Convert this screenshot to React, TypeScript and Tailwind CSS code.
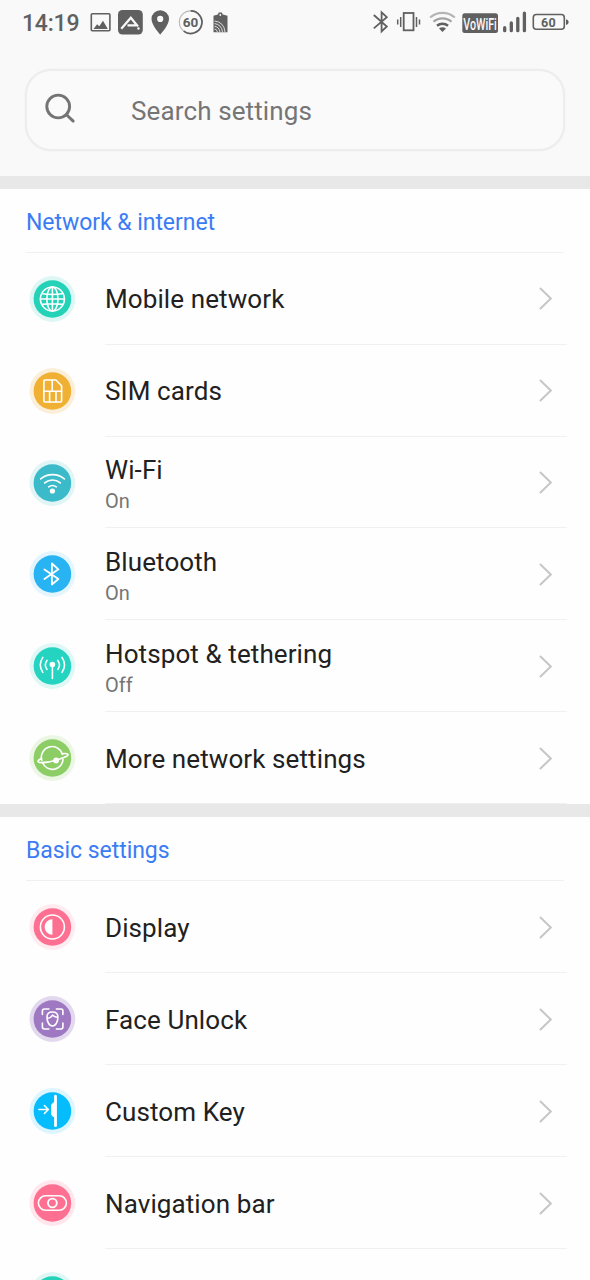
import type { ReactNode } from "react";

type Item = {
  label: string;
  status?: string;
  color: string;
  ring: string;
  icon: ReactNode;
};

const networkItems: Item[] = [
  {
    label: "Mobile network",
    color: "#24d2b8",
    ring: "#dff7f4",
    icon: (
      <>
        <circle cx="23" cy="23" r="12" />
        <ellipse cx="23" cy="23" rx="5.6" ry="12" />
        <path d="M23 11v24M11 23h24M13 17.8q10 1.4 20 0M13 28.4q10-1.4 20 0" />
      </>
    ),
  },
  {
    label: "SIM cards",
    color: "#efb033",
    ring: "#fcefd9",
    icon: (
      <>
        <path d="M15.5 12h11l5.7 5.7V33a1 1 0 0 1-1 1H15.5a1 1 0 0 1-1-1V13a1 1 0 0 1 1-1Z" />
        <path d="M14.5 23.2h17.7M22.8 12v11.2M20.2 23.2V34M26.6 23.2V34" />
      </>
    ),
  },
  {
    label: "Wi-Fi",
    status: "On",
    color: "#3bbac9",
    ring: "#e1f5f7",
    icon: (
      <>
        <path d="M11.3 18.9a18.5 18.5 0 0 1 23.6 0M15.3 22.900a12 12 0 0 1 15.6 0M19.3 26.900a6.500 6.500 0 0 1 7.600 0" />
        <circle cx="23" cy="31" r="2.600" fill="white" stroke="none" />
      </>
    ),
  },
  {
    label: "Bluetooth",
    status: "On",
    color: "#28b3f2",
    ring: "#e4f5fe",
    icon: <path d="M15 18.5 29 28l-6.500 5.500v-21L29 18.300 15 28" strokeWidth="1.800" />,
  },
  {
    label: "Hotspot & tethering",
    status: "Off",
    color: "#24d4c0",
    ring: "#dff8f5",
    icon: (
      <>
        <circle cx="23" cy="21.500" r="2.800" fill="white" stroke="none" />
        <path d="M23 22v13.500M17.600 17.400a7.500 7.500 0 0 0 0 9M28.400 17.400a7.500 7.500 0 0 1 0 9M13.400 14.400a13.500 13.500 0 0 0 0 15M32.600 14.400a13.500 13.500 0 0 1 0 15" />
      </>
    ),
  },
  {
    label: "More network settings",
    color: "#8ccd66",
    ring: "#ebf7e4",
    icon: (
      <>
        <path d="M12.400 25.500A10.600 10.600 0 0 1 33 19.200M13.300 28a10.600 10.600 0 0 0 20.300-3.800" />
        <path d="M12.200 23.500c-2.500 1-4 2.300-3.400 3.200 1.200 1.500 9.300.8 17.700-1.500 7.600-2 12.800-4.400 12-5.900-.500-.9-2.700-1-5.700-.5" />
        <circle cx="26.700" cy="25.500" r="2.900" fill="white" stroke="none" />
      </>
    ),
  },
];

const basicItems: Item[] = [
  {
    label: "Display",
    color: "#fd7091",
    ring: "#ffecf1",
    icon: (
      <>
        <circle cx="23" cy="23" r="12" />
        <path d="M23 15.200v15.600a7.800 7.800 0 0 1 0-15.600Z" fill="white" stroke="none" />
      </>
    ),
  },
  {
    label: "Face Unlock",
    color: "#9f78c2",
    ring: "#e3d9ee",
    icon: (
      <>
        <path d="M13 18.500V15a2 2 0 0 1 2-2h4.500M27 13h4.500a2 2 0 0 1 2 2v3.500M33.500 27v4a2 2 0 0 1-2 2H27M19.500 33H15a2 2 0 0 1-2-2v-4" />
        <path d="M17.600 21c0-3.400 2.200-5 5.400-5s5.500 1.600 5.500 5c0 4.500-2 9-5.500 9s-5.400-4.500-5.400-9ZM17.600 22.500c3-.3 4.700-1.600 5.600-3.500 1.200 1.300 3 2.300 5.200 2.500" />
      </>
    ),
  },
  {
    label: "Custom Key",
    color: "#05bdfc",
    ring: "#dcf5fe",
    icon: (
      <>
        <path d="M9.500 21.500h9M15 17.500l4 4-4 4" />
        <path
          d="M24.700 8.200a1.400 1.400 0 0 1 2.800 0v29.500a1.400 1.400 0 0 1-2.800 0v-8.700h-1l-2-2.500v-9.500l2-2.500h1Z"
          fill="white"
          stroke="none"
        />
      </>
    ),
  },
  {
    label: "Navigation bar",
    color: "#fd7091",
    ring: "#ffe7ed",
    icon: (
      <>
        <rect x="9" y="15.700" width="28" height="14.600" rx="7.300" />
        <circle cx="23" cy="23" r="4.400" strokeWidth="1.900" />
      </>
    ),
  },
  {
    label: "",
    color: "#24d2b8",
    ring: "#dff7f4",
    icon: null,
  },
];

const StatusBar = () => (
  <div className="flex h-[46px] items-center justify-between pl-[22px] pr-[20px] text-[#606060]">
    <div className="flex items-center">
      <span className="w-[68px] pt-0.5 text-[23px] font-medium leading-[46px] tracking-[-0.2px]">
        14:19
      </span>
      {/* left notification icons */}
      <svg width="142" height="46" viewBox="90 0 142 46" fill="currentColor">
        <rect x="91.300" y="13.800" width="18.600" height="17" rx="1" fill="none" stroke="currentColor" strokeWidth="1.600" />
        <path d="m93.500 29 3.600-4.800 2.200 2 3.700-5.400 4.800 8.200Z" />
        <rect x="118" y="10" width="24.800" height="24.500" rx="4.500" />
        <path d="m121.300 28.800 9.500-11 7.200 8.700M127.500 25.300h8.500" fill="none" stroke="#f9f9f9" strokeWidth="2.200" />
        <circle cx="138.500" cy="28.500" r="1.200" fill="#f9f9f9" />
        <path
          fillRule="evenodd"
          d="M160.200 10.200a8.700 8.700 0 0 0-8.700 8.700c0 6.200 8.700 15.600 8.700 15.600s8.800-9.400 8.800-15.600a8.700 8.700 0 0 0-8.800-8.700Zm0 5.600a3.100 3.100 0 1 1 0 6.200 3.100 3.100 0 0 1 0-6.200Z"
        />
        <circle cx="190.700" cy="22.200" r="11.300" fill="none" stroke="#b8b8b8" strokeWidth="1.100" />
        <path d="M190.700 10.900a11.300 11.300 0 1 1-7 20.200" fill="none" stroke="currentColor" strokeWidth="1.700" />
        <text x="190.500" y="27" textAnchor="middle" fontSize="13.500" fontWeight="700">
          60
        </text>
        <path d="M213.500 15.700l4.300-1.200 1-2h3l1 2 4.700 1.200v16.500h-14Z" />
        <circle cx="220.300" cy="15" r="0.900" fill="#f9f9f9" />
        <path
          d="M214.500 29q2.200 0 3 3M214.500 26.300q4.500.5 5.500 5.700M214.500 23.600q7 .8 8 8.400M214.500 21q9.500 1 10.500 11"
          fill="none"
          stroke="#f9f9f9"
          strokeWidth="0.800"
        />
      </svg>
    </div>
    <svg width="200" height="46" viewBox="370 0 200 46" fill="none" stroke="currentColor">
      <path d="m373.800 15 13 11.500-5.200 4.900V12.400l5.200 4.800-13 11.200" strokeWidth="1.800" />
      <rect x="403.700" y="13" width="9.800" height="17.300" strokeWidth="1.800" />
      <path d="M400.700 17v10M416.500 17v10M397.700 19.500v5M419.500 19.500v5" strokeWidth="1.500" />
      {/* wifi, outer arcs are dimmed */}
      <path d="M430.200 17.500a18.500 18.500 0 0 1 24.600 0" stroke="#b5b5b5" strokeWidth="2.200" />
      <path d="M433.500 21.800a13.500 13.500 0 0 1 18 0" stroke="#a2a2a2" strokeWidth="2.200" />
      <path d="M437 25.800a8.500 8.500 0 0 1 11 0" strokeWidth="2.500" />
      <path d="M439 28.500q3.500-2.500 7 0l-3.500 3.500Z" fill="currentColor" stroke="none" />
      <rect x="462.300" y="13.300" width="35.700" height="19.700" rx="2.500" fill="currentColor" stroke="none" />
      <text x="463.300" y="29.700" textLength="33.500" lengthAdjust="spacingAndGlyphs" fontSize="16.500" fontWeight="500" fill="#f9f9f9" stroke="none">
        VoWiFi
      </text>
      <path d="M504.700 27.700v3M511.300 23v7.700M517.800 18.300v12.400M524.400 13.200v17.500" strokeWidth="3.300" strokeLinecap="round" />
      <rect x="533.300" y="14.500" width="31" height="14.700" rx="3" strokeWidth="1.600" />
      <path d="M566 19.200q2.700.5 2.700 2.900t-2.700 2.900Z" fill="currentColor" stroke="none" />
      <text x="548.600" y="26.500" textAnchor="middle" fontSize="12.500" fontWeight="700" letterSpacing="0.500" fill="currentColor" stroke="none">
        60
      </text>
    </svg>
  </div>
);

const SearchBar = () => (
  <div className="mx-[25px] mt-[23px] flex h-[82px] items-center rounded-[26px] border-2 border-[#ededed] bg-[#fafafa] pl-[18px] shadow-[0_0_2px_rgba(0,0,0,0.05)]">
    <svg width="32" height="32" viewBox="0 0 32 32" className="-mt-0.5 shrink-0" fill="none" stroke="#747474" strokeWidth="2.900">
      <circle cx="13.200" cy="13.500" r="11.400" />
      <path d="m21.500 21.800 6.700 6.300" strokeLinecap="round" />
    </svg>
    <span className="ml-[54px] pt-0.5 text-[26px] leading-[30px] tracking-[0.12px] text-[#757575]">
      Search settings
    </span>
  </div>
);

const Row = ({ item }: { item: Item }) => (
  <div className="flex min-h-0 flex-1 pl-[29px]">
    <div className="flex w-[76px] shrink-0 items-center">
      <svg width="47" height="46" viewBox="-0.4 0 47 46" fill="none" stroke="white" strokeWidth="1.600" strokeLinecap="round" strokeLinejoin="round">
        <circle cx="23" cy="23" r="22.900" fill={item.ring} stroke="none" />
        <circle cx="23" cy="23" r="18.800" fill={item.color} stroke="none" />
        {item.icon}
      </svg>
    </div>
    <div className="mr-[23px] flex flex-1 items-center justify-between border-b border-[#f0f0f0] pr-[14px]">
      <div className={item.status ? "flex flex-col pt-1.5" : "flex flex-col pt-0.5"}>
        <span className="text-[26px] leading-[32px] tracking-[0.1px] text-[#212121]">
          {item.label}
        </span>
        {item.status && (
          <span className="text-[20px] leading-[30px] text-[#757575]">
            {item.status}
          </span>
        )}
      </div>
      <svg width="14" height="24" viewBox="0 0 14 24" fill="none" stroke="#c6c6c6" strokeWidth="2">
        <path d="m1.500 2.500 10.300 10-10.300 10" strokeLinecap="round" />
      </svg>
    </div>
  </div>
);

const Section = ({
  title,
  items,
  listClass,
}: {
  title: string;
  items: Item[];
  listClass: string;
}) => (
  <section className="border-t-[13px] border-[#e8e8e8] bg-[#fefefe]">
    <h2 className="mx-[26px] h-16 border-b border-[#f0f0f0] text-[23px] leading-[68px] tracking-[-0.05px] text-[#3b7cf5]">
      {title}
    </h2>
    <div className={`flex flex-col ${listClass}`}>
      {items.map((item, i) => (
        <Row key={i} item={item} />
      ))}
    </div>
  </section>
);

const App = () => {
  return (
    <div className="h-[1280px] w-[590px] overflow-hidden bg-[#f9f9f9] font-[Roboto,sans-serif]">
      <header className="h-[176px]">
        <StatusBar />
        <SearchBar />
      </header>
      <Section title="Network & internet" items={networkItems} listClass="h-[551px]" />
      <Section title="Basic settings" items={basicItems} listClass="h-[460px]" />
    </div>
  );
};

export default App;
